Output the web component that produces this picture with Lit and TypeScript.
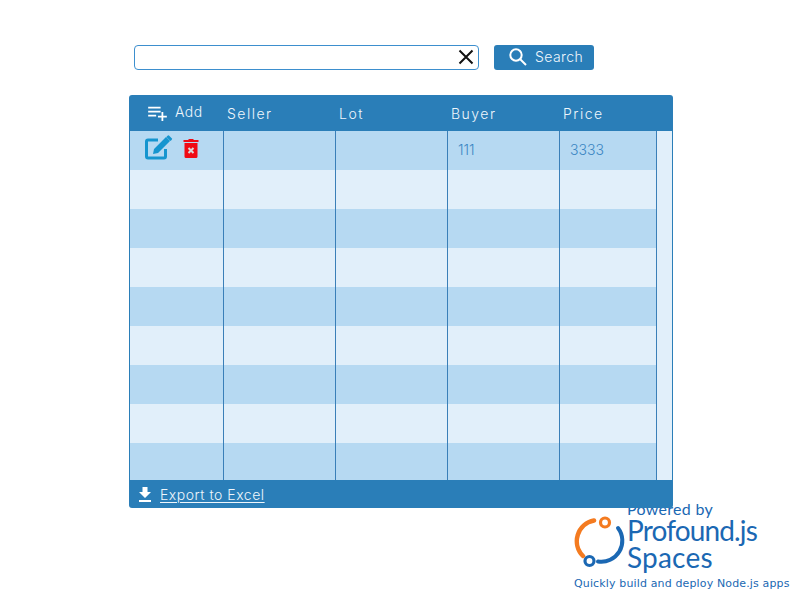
import { LitElement, html, css } from "lit";
import { customElement } from "lit/decorators.js";

const ROWS: [string, string][] = [["111", "3333"], ["", ""], ["", ""], ["", ""], ["", ""], ["", ""], ["", ""], ["", ""], ["", ""]];

@customElement("app-root")
export class AppRoot extends LitElement {
  static styles = css`
    :host { display: block; position: relative; width: 800px; height: 600px; overflow: hidden; background: #fff; font-family: Inter, "Liberation Sans", sans-serif; font-weight: 300; }
    .page { display: flex; flex-direction: column; padding: 45px 0 0 129px; }
    .search { display: flex; gap: 15px; padding-left: 5px; height: 25px; }
    .input { box-sizing: border-box; width: 345px; height: 25px; border: 1px solid #3d8fce; border-radius: 4px; display: flex; align-items: center; justify-content: flex-end; padding: 0 4px 1px 0; background: #fff; }
    .btn { box-sizing: border-box; width: 100px; height: 25px; background: #2a7eb8; border-radius: 3px; color: #eef6fc; display: flex; align-items: center; padding: 0 0 2px 14px; gap: 7px; font-size: 14px; letter-spacing: 0.4px; }
    .btn svg { margin-top: 1px; }
    .grid { position: relative; z-index: 1; margin-top: 25px; width: 544px; display: flex; flex-direction: column; }
    .head { height: 36px; background: #2a7eb8; border-radius: 3px 3px 0 0; display: grid; grid-template-columns: 95px 112px 112px 112px 113px; color: #eef6fc; font-size: 14px; letter-spacing: 1.5px; }
    .head > div { display: flex; align-items: center; padding: 1px 0 0 3px; }
    .head .add { padding: 0 0 4px 18px; gap: 7px; letter-spacing: 0.5px; }
    .head .add svg { margin-top: 4px; }
    .body { box-sizing: border-box; border-left: 1px solid #2a7eb8; border-right: 1px solid #2a7eb8; }
    .row { height: 39px; display: grid; grid-template-columns: 94px 112px 112px 112px 97px 1fr; background: #e1effa; }
    .row:nth-child(odd) { background: #b6d9f2; }
    .row:last-child { height: 37px; }
    .cell { box-sizing: border-box; border-right: 1px solid #3a7fb8; display: flex; align-items: center; padding: 0 0 2px 10px; font-size: 14px; color: #3a86c2; }
    .cell.last { border: 0; background: #e1effa; }
    .actions { padding: 0 0 5px 15px; gap: 10px; }
    .actions .edit { margin-top: -2px; }
    .foot { height: 28px; background: #2a7eb8; border-radius: 0 0 3px 3px; display: flex; align-items: center; padding-left: 9px; gap: 8px; color: #eef6fc; font-size: 14px; letter-spacing: 0.52px; }
    .foot span { text-decoration: underline; text-underline-offset: 2px; text-decoration-thickness: 1px; }
    svg { display: block; flex: none; }
    .brand { position: absolute; left: 574px; top: 500px; width: 226px; height: 100px; color: #1b68b3; }
    .brand-main { display: flex; gap: 1px; }
    .brand-text { display: flex; flex-direction: column; padding-left: 1px; font-family: Lato, sans-serif; font-weight: 400; }
    .powered { font-size: 16px; line-height: 17px; height: 17px; letter-spacing: 0.3px; }
    .name { font-size: 28px; line-height: 27px; letter-spacing: -0.85px; }
    .name.two { letter-spacing: 0.2px; }
    .tag { position: absolute; left: 0; top: 77px; font-family: "DejaVu Sans", sans-serif; font-weight: 400; font-size: 11px; line-height: 14px; letter-spacing: 0.14px; white-space: nowrap; }
    .logo { margin-top: 16px; }
  `;

  render() {
    return html`
      <div class="brand">
        <div class="brand-main">
          <svg class="logo" width="51" height="52" viewBox="0 0 51 52" fill="none">
            <path d="M20 4.500 A21 21 0 0 0 9 40" stroke="#f47b20" stroke-width="4.500" stroke-linecap="round"/>
            <circle cx="31" cy="6.500" r="4.500" stroke="#f47b20" stroke-width="3.200"/>
            <path d="M44 12 A21 21 0 0 1 24 45.500" stroke="#1b68b3" stroke-width="4" stroke-linecap="round"/>
            <circle cx="15.500" cy="45" r="4.500" stroke="#1b68b3" stroke-width="3.200"/>
          </svg>
          <div class="brand-text">
            <div class="powered">Powered by</div>
            <div class="name">Profound.js</div>
            <div class="name two">Spaces</div>
          </div>
        </div>
        <div class="tag">Quickly build and deploy Node.js apps</div>
      </div>
      <div class="page">
        <div class="search">
          <div class="input">
            <svg width="16" height="16" viewBox="0 0 16 16"><path d="M1.500 1.500 L14.500 14.500 M14.500 1.500 L1.500 14.500" stroke="#111" stroke-width="2"/></svg>
          </div>
          <div class="btn">
            <svg width="20" height="20" viewBox="0 0 20 20" fill="none"><circle cx="8" cy="8" r="5.700" stroke="#fff" stroke-width="2"/><path d="M12 12 L18 18" stroke="#fff" stroke-width="2"/></svg>
            <span>Search</span>
          </div>
        </div>
        <div class="grid">
          <div class="head">
            <div class="add">
              <svg width="21" height="16" viewBox="0 0 21 18"><path d="M0 2h14v2H0zM0 6.500h14v2H0zM0 11h9v2H0zM15 8h2v4h4v2h-4v4h-2v-4h-4v-2h4z" fill="#fff"/></svg>
              <span>Add</span>
            </div>
            <div>Seller</div><div>Lot</div><div>Buyer</div><div>Price</div>
          </div>
          <div class="body">
            ${ROWS.map(([buyer, price], i) => html`
              <div class="row">
                <div class="cell ${i === 0 ? "actions" : ""}">
                  ${i === 0 ? html`
                    <svg class="edit" width="28" height="25" viewBox="0 0 28 25">
                      <path d="M13 5H3a1.500 1.500 0 0 0-1.500 1.500v15A1.500 1.500 0 0 0 3 23h16a1.500 1.500 0 0 0 1.500-1.500V14" fill="none" stroke="#1695cf" stroke-width="3"/>
                      <path d="M8 19l1-5L21 2l4 4L13 18z M22.500 0.800l1.200-.6 3.500 3.500-.6 1.200-1.200 1.200-4-4z" fill="#1695cf"/>
                    </svg>
                    <svg width="16" height="19" viewBox="0 0 15 19">
                      <path d="M5 0h5v1h5v2H0V1h5zM1 4h13v13.500a1.500 1.500 0 0 1-1.500 1.500h-10A1.500 1.500 0 0 1 1 17.500z" fill="#f00a14"/>
                      <path d="M5 9l5 5M10 9l-5 5" stroke="#d9d9d9" stroke-width="2"/>
                    </svg>` : ""}
                </div>
                <div class="cell"></div>
                <div class="cell"></div>
                <div class="cell">${buyer}</div>
                <div class="cell">${price}</div>
                <div class="cell last"></div>
              </div>`)}
          </div>
          <div class="foot">
            <svg width="14" height="15" viewBox="0 0 14 15"><path d="M4.500 0h5v5H13L7 11 1 5h3.500zM1 13h12v2H1z" fill="#fff"/></svg>
            <span>Export to Excel</span>
          </div>
        </div>
      </div>
    `;
  }
}
